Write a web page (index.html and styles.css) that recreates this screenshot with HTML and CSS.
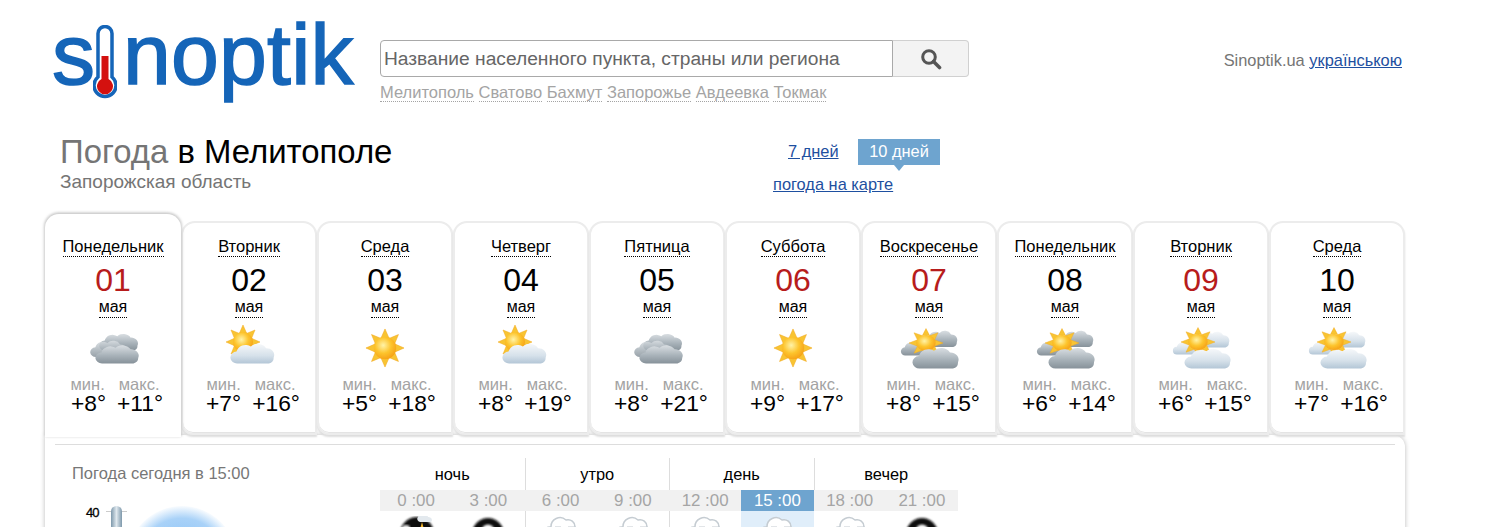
FILE: index.html
```html
<!DOCTYPE html>
<html lang="ru">
<head>
<meta charset="utf-8">
<title>Погода в Мелитополе</title>
<link rel="stylesheet" href="styles.css">
</head>
<body>
<svg class="defs" width="0" height="0" aria-hidden="true">
  <defs>
    <linearGradient id="gGray" x1="0" y1="0" x2="0" y2="1"><stop offset="0" stop-color="#d9dee2"/><stop offset=".55" stop-color="#a9b3ba"/><stop offset="1" stop-color="#87929a"/></linearGradient>
    <linearGradient id="gLight" x1="0" y1="0" x2="0" y2="1"><stop offset="0" stop-color="#f6f8fa"/><stop offset=".6" stop-color="#d6e1ea"/><stop offset="1" stop-color="#b3c6d6"/></linearGradient>
    <radialGradient id="gSun" cx=".42" cy=".38" r=".7"><stop offset="0" stop-color="#fff3a8"/><stop offset=".5" stop-color="#fdc52e"/><stop offset="1" stop-color="#f59a12"/></radialGradient>
    <filter id="soft" x="-10%" y="-10%" width="120%" height="120%"><feGaussianBlur stdDeviation=".35"/></filter>
    <filter id="softer" x="-10%" y="-10%" width="120%" height="120%"><feGaussianBlur stdDeviation=".8"/></filter>
    <path id="cl" d="M9 30a7 7 0 0 1-1-14a9.500 9.500 0 0 1 15-6a10 10 0 0 1 16 2a8 8 0 0 1 8 11a7 7 0 0 1-5 7z"/>
    <g id="rays"><path d="M0-17 3.500-9h-7zM0 17 3.500 9h-7zM-17 0-9-3.500v7zM17 0 9-3.500v7zM-12-12-3.500-8.500-8.500-3.500zM12-12 3.500-8.500 8.500-3.500zM-12 12-3.500 8.500-8.500 3.500zM12 12 3.500 8.500 8.500 3.500z" fill="#f8c433" stroke="#f3a91f" stroke-width=".5"/></g>
    <symbol id="i-clouds" viewBox="0 0 60 50">
      <g filter="url(#soft)">
        <use href="#cl" fill="url(#gGray)" transform="translate(15 6) scale(.84 .72)"/>
        <use href="#cl" fill="url(#gGray)" transform="translate(6 13) scale(.8 .7)" opacity=".85"/>
        <use href="#cl" fill="url(#gGray)" transform="translate(11 17) scale(.94 .78)"/>
      </g>
    </symbol>
    <symbol id="i-sun" viewBox="0 0 60 50">
      <g filter="url(#soft)" transform="translate(30 25) scale(1.12)"><use href="#rays"/><circle r="10" fill="url(#gSun)"/></g>
    </symbol>
    <symbol id="i-suncloud" viewBox="0 0 60 50">
      <g filter="url(#soft)">
        <g transform="translate(24 19)"><use href="#rays"/><circle r="10" fill="url(#gSun)"/></g>
        <use href="#cl" fill="url(#gLight)" transform="translate(10 15) scale(.95 .85)"/>
      </g>
    </symbol>
    <symbol id="i-sunclouds" viewBox="0 0 60 50">
      <g filter="url(#soft)">
        <use href="#cl" fill="url(#gGray)" transform="translate(24 3) scale(.72 .7)"/>
        <use href="#cl" fill="url(#gGray)" transform="translate(1 15) scale(.6 .58)"/>
        <g transform="translate(27 20) scale(1 .85)"><use href="#rays"/><circle r="9.500" fill="url(#gSun)"/></g>
        <use href="#cl" fill="url(#gGray)" transform="translate(12 19) scale(1 .88)"/>
      </g>
    </symbol>
    <symbol id="i-sunlight" viewBox="0 0 60 50">
      <g filter="url(#soft)">
        <use href="#cl" fill="url(#gLight)" transform="translate(25 4) scale(.7 .68)"/>
        <use href="#cl" fill="url(#gLight)" transform="translate(1 15) scale(.6 .55)"/>
        <g transform="translate(27 19) scale(1 .85)"><use href="#rays"/><circle r="9.500" fill="url(#gSun)"/></g>
        <use href="#cl" fill="url(#gLight)" transform="translate(12 20) scale(1 .85)"/>
      </g>
    </symbol>
    <symbol id="i-outline" viewBox="0 0 40 24">
      <path filter="url(#soft)" d="M8 24a6 6 0 0 1 2-13a9 9 0 0 1 15-7a7 7 0 0 1 9 7" fill="#fff" stroke="#c5ccd2" stroke-width="1.500"/>
      <path filter="url(#soft)" d="M27 11h7a5 5 0 0 1 1 7M14 11h6" fill="none" stroke="#c5ccd2" stroke-width="1.200"/>
    </symbol>
    <symbol id="i-night" viewBox="0 0 40 24">
      <circle filter="url(#softer)" cx="20" cy="18" r="16" fill="#0d0d0d"/>
      <ellipse filter="url(#softer)" cx="20" cy="14" rx="6" ry="5.500" fill="#fff"/>
    </symbol>
    <symbol id="i-nightcloud" viewBox="0 0 40 24">
      <circle filter="url(#softer)" cx="21" cy="18" r="17" fill="#0d0d0d"/>
      <ellipse filter="url(#softer)" cx="10" cy="12" rx="4" ry="3" fill="#eee"/>
      <path d="M26 6 29 17h-6z" fill="#f3b52a"/>
      <path filter="url(#soft)" d="M22 1a5 3 0 0 1 10 0a3.500 3 0 0 1 3 5H24a3 3 0 0 1-2-5z" fill="#e3e9ee"/>
    </symbol>
  </defs>
</svg>

<header class="header">
  <a class="logo" href="#">
    <span class="logo-s">s</span>
    <svg class="logo-therm" viewBox="0 0 24 76" width="24" height="76" aria-hidden="true">
      <path d="M12 1.500a7 7 0 0 1 7 7V52a11 11 0 1 1-14 0V8.500a7 7 0 0 1 7-7z" fill="#fff" stroke="#1565b8" stroke-width="3.500"/>
      <path d="M8.500 31h7v23a8 8 0 1 1-7 0z" fill="#d4110f"/>
    </svg>
    <span class="logo-rest">noptik</span>
  </a>
  <div class="search">
    <div class="search-row">
      <input class="search-input" type="text" placeholder="Название населенного пункта, страны или региона">
      <button class="search-btn" type="button" aria-label="Поиск">
        <svg viewBox="0 0 22 22" width="22" height="22"><circle cx="9" cy="9" r="6.300" fill="none" stroke="#555" stroke-width="3"/><path d="M13.500 13.500 19.500 19.500" stroke="#555" stroke-width="3.600" stroke-linecap="round"/></svg>
      </button>
    </div>
    <div class="suggest">
      <a href="#">Мелитополь</a> <a href="#">Сватово</a> <a href="#">Бахмут</a> <a href="#">Запорожье</a> <a href="#">Авдеевка</a> <a href="#">Токмак</a>
    </div>
  </div>
  <div class="lang">Sinoptik.ua <a href="#">українською</a></div>
</header>

<section class="title-row">
  <div class="title">
    <h1><span class="title-gray">Погода</span> в Мелитополе</h1>
    <div class="region">Запорожская область</div>
  </div>
  <div class="periods">
    <div class="period-row">
      <a class="period-link" href="#">7 дней</a>
      <span class="period-active">10 дней</span>
    </div>
    <a class="map-link" href="#">погода на карте</a>
  </div>
</section>

<div class="tabs">
  <div class="tab tab-active"><a class="dn">Понедельник</a><div class="num red">01</div><a class="mon">мая</a><svg class="ico"><use href="#i-clouds"/></svg><div class="mm"><span>мин.</span><span>макс.</span></div><div class="tt"><b>+8°</b><b>+11°</b></div></div>
  <div class="tab"><a class="dn">Вторник</a><div class="num">02</div><a class="mon">мая</a><svg class="ico"><use href="#i-suncloud"/></svg><div class="mm"><span>мин.</span><span>макс.</span></div><div class="tt"><b>+7°</b><b>+16°</b></div></div>
  <div class="tab"><a class="dn">Среда</a><div class="num">03</div><a class="mon">мая</a><svg class="ico"><use href="#i-sun"/></svg><div class="mm"><span>мин.</span><span>макс.</span></div><div class="tt"><b>+5°</b><b>+18°</b></div></div>
  <div class="tab"><a class="dn">Четверг</a><div class="num">04</div><a class="mon">мая</a><svg class="ico"><use href="#i-suncloud"/></svg><div class="mm"><span>мин.</span><span>макс.</span></div><div class="tt"><b>+8°</b><b>+19°</b></div></div>
  <div class="tab"><a class="dn">Пятница</a><div class="num">05</div><a class="mon">мая</a><svg class="ico"><use href="#i-clouds"/></svg><div class="mm"><span>мин.</span><span>макс.</span></div><div class="tt"><b>+8°</b><b>+21°</b></div></div>
  <div class="tab"><a class="dn">Суббота</a><div class="num red">06</div><a class="mon">мая</a><svg class="ico"><use href="#i-sun"/></svg><div class="mm"><span>мин.</span><span>макс.</span></div><div class="tt"><b>+9°</b><b>+17°</b></div></div>
  <div class="tab"><a class="dn">Воскресенье</a><div class="num red">07</div><a class="mon">мая</a><svg class="ico"><use href="#i-sunclouds"/></svg><div class="mm"><span>мин.</span><span>макс.</span></div><div class="tt"><b>+8°</b><b>+15°</b></div></div>
  <div class="tab"><a class="dn">Понедельник</a><div class="num">08</div><a class="mon">мая</a><svg class="ico"><use href="#i-sunclouds"/></svg><div class="mm"><span>мин.</span><span>макс.</span></div><div class="tt"><b>+6°</b><b>+14°</b></div></div>
  <div class="tab"><a class="dn">Вторник</a><div class="num red">09</div><a class="mon">мая</a><svg class="ico"><use href="#i-sunlight"/></svg><div class="mm"><span>мин.</span><span>макс.</span></div><div class="tt"><b>+6°</b><b>+15°</b></div></div>
  <div class="tab"><a class="dn">Среда</a><div class="num">10</div><a class="mon">мая</a><svg class="ico"><use href="#i-sunlight"/></svg><div class="mm"><span>мин.</span><span>макс.</span></div><div class="tt"><b>+7°</b><b>+16°</b></div></div>
</div>

<section class="panel">
  <div class="panel-inner">
    <div class="now">
      <div class="now-title">Погода сегодня в 15:00</div>
      <div class="gauge">
        <span class="gauge-num">40</span>
        <span class="gauge-tube"></span>
        <span class="gauge-blob"></span>
      </div>
    </div>
    <div class="hours">
      <div class="part">ночь</div><div class="part sep">утро</div><div class="part sep">день</div><div class="part sep">вечер</div>
      <div class="hour">0 :00</div><div class="hour">3 :00</div><div class="hour">6 :00</div><div class="hour">9 :00</div><div class="hour">12 :00</div><div class="hour now-h">15 :00</div><div class="hour">18 :00</div><div class="hour">21 :00</div>
      <div class="cell"><svg class="hico"><use href="#i-nightcloud"/></svg></div>
      <div class="cell"><svg class="hico"><use href="#i-night"/></svg></div>
      <div class="cell sep-c"><svg class="hico"><use href="#i-outline"/></svg></div>
      <div class="cell"><svg class="hico"><use href="#i-outline"/></svg></div>
      <div class="cell sep-c"><svg class="hico"><use href="#i-outline"/></svg></div>
      <div class="cell now-c"><svg class="hico"><use href="#i-outline"/></svg></div>
      <div class="cell"><svg class="hico"><use href="#i-outline"/></svg></div>
      <div class="cell"><svg class="hico"><use href="#i-night"/></svg></div>
    </div>
  </div>
</section>
</body>
</html>
```

FILE: styles.css
```css
html, body {
  margin: 0;
  height: 527px;
  overflow: hidden;
  background: #fff;
}
body {
  font-family: "Liberation Sans", Arial, sans-serif;
  color: #000;
}
.defs { position: absolute; }

/* header */
.header {
  display: flex;
  align-items: flex-start;
  height: 123px;
  padding-left: 52px;
  padding-right: 91px;
  box-sizing: border-box;
}
.logo {
  display: flex;
  align-items: flex-start;
  width: 328px;
  height: 110px;
  color: #1565b8;
  text-decoration: none;
  font-size: 86px;
  line-height: 100px;
  padding-top: 4px;
  box-sizing: border-box;
  -webkit-text-stroke: 1.5px #1565b8;
}
.logo-s { width: 39px; }
.logo-therm { margin: 21px 0 0 2px; flex: none; }
.logo-rest { margin-left: 6px; letter-spacing: .2px; }

.search { width: 589px; margin-top: 40px; }
.search-row { display: flex; height: 37px; }
.search-input {
  flex: 1;
  min-width: 0;
  box-sizing: border-box;
  height: 37px;
  padding: 1px 3px 0;
  border: 1px solid #a9a9a9;
  border-radius: 4px 0 0 4px;
  outline: 0;
  font: 19.2px "Liberation Sans", Arial, sans-serif;
  color: #666;
}
.search-input::placeholder { color: #666; opacity: 1; }
.search-btn {
  width: 76px;
  height: 37px;
  padding: 0;
  display: flex;
  align-items: center;
  justify-content: center;
  background: #f3f3f3;
  border: 1px solid #d0d0d0;
  border-left: 0;
  border-radius: 0 4px 4px 0;
}
.suggest { margin-top: 5px; font-size: 16.5px; line-height: 20px; }
.suggest a {
  color: #a4a4a4;
  text-decoration: none;
  border-bottom: 1px dotted #a4a4a4;
}
.lang {
  margin-left: auto;
  margin-top: 51px;
  font-size: 16.4px;
  line-height: 18px;
  color: #757575;
}
.lang a { color: #1e4fa0; }

/* title */
.title-row {
  display: flex;
  height: 98px;
  padding-left: 60px;
}
.title { width: 690px; }
.title h1 {
  margin: 9px 0 0;
  font-size: 32.9px;
  line-height: 40px;
  font-weight: 400;
}
.title-gray { color: #757575; }
.region { font-size: 19px; line-height: 20px; color: #757575; }
.periods { width: 170px; margin-left: 23px; padding-top: 16px; }
.period-row { display: flex; align-items: center; height: 26px; }
.period-link { margin-left: 15px; width: 70px; font-size: 16.4px; line-height: 24px; margin-bottom: 2px; color: #1e4fa0; }
.period-active {
  position: relative;
  width: 82px;
  height: 26px;
  background: #6ea4cf;
  color: #fff;
  font-size: 16.4px;
  line-height: 25px;
  text-align: center;
}
.period-active::after {
  content: "";
  position: absolute;
  left: 36px;
  top: 26px;
  border: 5px solid transparent;
  border-top: 6px solid #6ea4cf;
  border-bottom: 0;
}
.map-link { display: block; margin-top: 10px; font-size: 16.4px; line-height: 18px; color: #1e4fa0; }

/* tabs */
.tabs {
  position: relative;
  z-index: 2;
  display: flex;
  align-items: flex-end;
  height: 221px;
  margin-top: -7px;
  padding-left: 45px;
}
.tab {
  box-sizing: border-box;
  width: 136px;
  height: 214px;
  padding-top: 14px;
  display: flex;
  flex-direction: column;
  align-items: center;
  background: #fff;
  border: 2px solid #ececec;
  border-radius: 14px 14px 0 12px;
  box-shadow: inset 0 -1px 0 #e4e4e4, 0 2px 2px #ddd;
}
.tab-active {
  padding-top: 23px;
  border: 0;
  border-radius: 14px 14px 0 0;
  box-shadow: -1px -1px 3px #ccc, 1px -1px 3px #ccc;
  position: relative;
  z-index: 3;
  height: 223px;
  margin-bottom: -2px;
}
.dn {
  font-size: 16.5px;
  line-height: 18px;
  padding-bottom: 1px;
  border-bottom: 1px dotted #000;
  white-space: nowrap;
}
.num {
  font-size: 32px;
  line-height: 36px;
  margin-top: 5px;
}
.num.red { color: #b71c1c; }
.mon {
  font-size: 16px;
  line-height: 18px;
  padding-bottom: 1px;
  border-bottom: 1px dotted #000;
}
.ico { display: block; width: 60px; height: 50px; margin-top: 5px; }
.mm {
  display: flex;
  justify-content: center;
  gap: 14px;
  margin-top: 4px;
  padding-left: 4px;
  font-size: 16.5px;
  line-height: 14px;
  color: #a3a3a3;
}
.tt {
  display: flex;
  justify-content: center;
  gap: 11px;
  margin-top: 1px;
  padding-left: 8px;
  font-size: 22.8px;
  line-height: 22px;
}
.tt b { font-weight: 400; }

/* panel */
.panel {
  position: relative;
  z-index: 1;
  box-sizing: border-box;
  margin-left: 45px;
  width: 1360px;
  height: 300px;
  padding: 9px 10px 0;
  border-radius: 0 12px 0 0;
  background: #fff;
  box-shadow: 0 0 5px #bbb;
}
.panel-inner {
  display: flex;
  align-items: flex-start;
  border-top: 1px solid #ddd;
  padding-top: 13px;
}
.now { width: 326px; padding-left: 17px; box-sizing: border-box; flex: none; }
.now-title { font-size: 16.5px; line-height: 30px; color: #777; }
.gauge { position: relative; height: 100px; margin-top: 18px; }
.gauge-num { position: absolute; left: 14px; top: 0; font-size: 13px; line-height: 14px; letter-spacing: -1px; -webkit-text-stroke: .3px #000; }
.gauge-tube {
  position: absolute; left: 39px; top: 0; width: 11px; height: 60px;
  border-radius: 6px 6px 0 0;
  background: linear-gradient(90deg, #7d98ab, #dfe8ee, #7d98ab);
}
.gauge-tube::before {
  content: "";
  position: absolute;
  left: -5px;
  top: 5px;
  width: 21px;
  height: 1px;
  z-index: -1;
  background: #ccc;
}
.gauge-blob {
  position: absolute; left: 55px; top: 0; width: 110px; height: 110px;
  border-radius: 50%;
  background: radial-gradient(circle, #7dbaf5 0, #a9d2f8 55%, #fff 72%);
}
.hours {
  display: grid;
  grid-template-columns: repeat(8, 1fr);
  margin-left: -1px;
  width: 578px;
}
.part {
  grid-column: span 2;
  height: 32px;
  font-size: 16.4px;
  line-height: 32px;
  text-align: center;
}
.part.sep { border-left: 1px solid #ddd; }
.hour {
  height: 21px;
  background: #f1f1f1;
  color: #a5a5a5;
  font-size: 16.9px;
  line-height: 21px;
  text-align: center;
}
.hour.now-h { background: #6ea4cf; color: #fff; }
.cell { height: 40px; display: flex; justify-content: center; padding-top: 5px; box-sizing: border-box; }
.sep-c { box-shadow: inset 1px 0 0 #ddd; }
.now-c { background: #e0eefa; }
.hico { width: 40px; height: 24px; display: block; }
```
